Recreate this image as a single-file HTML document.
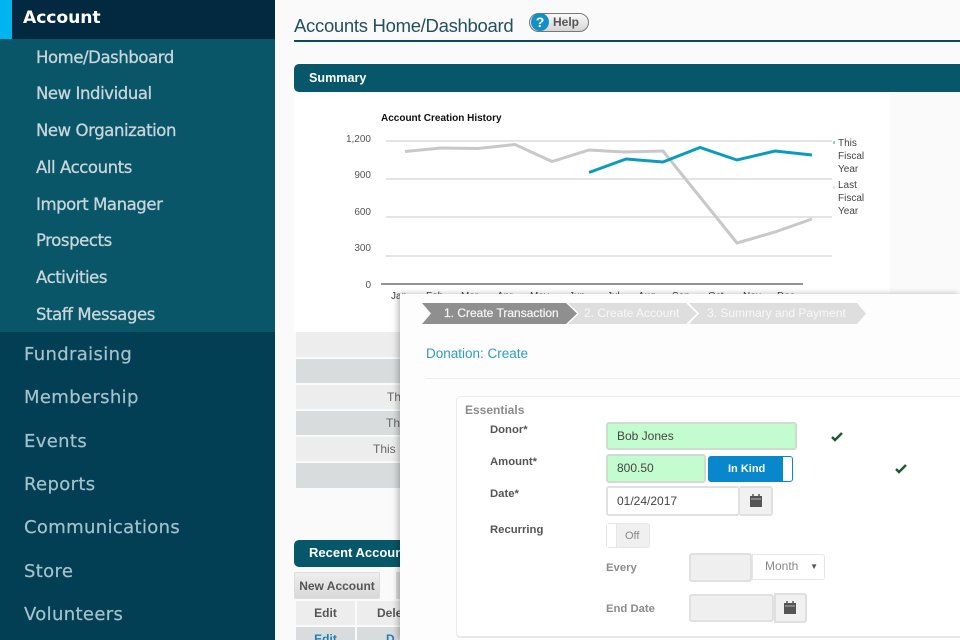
<!DOCTYPE html>
<html><head><meta charset="utf-8"><style>
html,body{margin:0;padding:0;width:960px;height:640px;overflow:hidden;background:#fafafa;font-family:"Liberation Sans",sans-serif}
body{filter:blur(.35px)}
.a{position:absolute;white-space:nowrap}
#s{position:absolute;left:0;top:0;width:275px;height:640px;background:#023f55;font-family:"DejaVu Sans",sans-serif}
.sub{color:#c9d6da;font-size:16.5px;left:36px;line-height:20px;letter-spacing:-.42px;-webkit-text-stroke:.3px #c9d6da}
.top{color:#a5c2ca;font-size:18px;left:24px;line-height:22px;letter-spacing:.35px;-webkit-text-stroke:.2px #a5c2ca}
.r{left:296px;width:110px;background:#ededed;font-size:12px;color:#666;line-height:24px}
.g{background:#d9dcdc}
.l{font-size:11.3px;font-weight:bold;color:#555}
.f{font-size:12px;color:#444;box-sizing:border-box;border:2px solid #e0e0e0;border-radius:3px;line-height:24px;padding-left:9px}
</style></head><body>
<div id="s">
<div class="a" style="left:0;top:0;width:275px;height:39px;background:#02293f"></div>
<div class="a" style="left:0;top:0;width:12px;height:39px;background:#00b4f0"></div>
<div class="a" style="left:0;top:39px;width:275px;height:293px;background:#0a5669"></div>
<div class="a" style="left:23px;top:7px;color:#fff;font-size:17.2px;line-height:22px;font-weight:bold;letter-spacing:-.1px">Account</div>
<div class="a sub" style="top:48px">Home/Dashboard</div>
<div class="a sub" style="top:84px">New Individual</div>
<div class="a sub" style="top:121px">New Organization</div>
<div class="a sub" style="top:158px">All Accounts</div>
<div class="a sub" style="top:195px">Import Manager</div>
<div class="a sub" style="top:231px">Prospects</div>
<div class="a sub" style="top:268px">Activities</div>
<div class="a sub" style="top:305px">Staff Messages</div>
<div class="a top" style="top:344px">Fundraising</div>
<div class="a top" style="top:387px">Membership</div>
<div class="a top" style="top:431px">Events</div>
<div class="a top" style="top:474px">Reports</div>
<div class="a top" style="top:517px">Communications</div>
<div class="a top" style="top:561px">Store</div>
<div class="a top" style="top:604px">Volunteers</div>
</div>

<div class="a" style="left:294px;top:14px;font-size:18.5px;line-height:24px;letter-spacing:-.3px;color:#24505f">Accounts Home/Dashboard</div>
<div class="a" style="left:294px;top:40px;width:666px;height:2px;background:#0c4a5e"></div>
<div class="a" style="left:529px;top:13px;width:58px;height:17px;border:1px solid #777;border-radius:10px;background:linear-gradient(#fafafa,#d5d5d5)"></div>
<div class="a" style="left:531px;top:13px;width:18px;height:18px;border-radius:50%;background:#1291c8;color:#fff;font-weight:bold;font-size:14px;line-height:18px;text-align:center">?</div>
<div class="a" style="left:553px;top:15px;font-size:12px;font-weight:bold;color:#555;line-height:15px">Help</div>

<div class="a" style="left:294px;top:64px;width:666px;height:28px;background:#07576a;border-radius:5px 0 0 5px"></div>
<div class="a" style="left:309px;top:70px;color:#fff;font-size:12.6px;font-weight:bold;line-height:16px">Summary</div>
<div class="a" style="left:294px;top:92px;width:596px;height:240px;background:#fff"></div>

<svg class="a" style="left:294px;top:92px" width="596" height="210" viewBox="294 92 596 210">
<text x="381" y="121" font-size="10" font-weight="bold" fill="#111" font-family="Liberation Sans">Account Creation History</text>
<g stroke="#dcdcdc" stroke-width="1.5"><path d="M386 141H832M386 179H832M386 217H832M386 256H832"/></g>
<path d="M381 284H803" stroke="#555" stroke-width="1.2"/>
<g fill="#555" font-size="10" font-family="Liberation Sans" text-anchor="end"><text x="371" y="142">1,200</text><text x="371" y="178">900</text><text x="371" y="215">600</text><text x="371" y="251">300</text><text x="371" y="288">0</text></g>
<polyline fill="none" stroke="#c8c8c8" stroke-width="3" points="405,151.500 441,148 478,148.500 515,144.500 552,161.500 589,150 624,152 663,151 700,197 737,243 775,232 812,219"/>
<polyline fill="none" stroke="#0a9cbe" stroke-width="3" points="589,172.500 626,159 663,162 700,147.500 737,160 775,151 812,155"/>
<g fill="#444" font-size="10" font-family="Liberation Sans"><text x="838" y="146">This</text><text x="838" y="159">Fiscal</text><text x="838" y="172">Year</text><text x="838" y="188">Last</text><text x="838" y="201">Fiscal</text><text x="838" y="214">Year</text></g>
<path d="M834 141v3" stroke="#0a9cbe"/><path d="M834 186v3" stroke="#ccc"/>
<g fill="#444" font-size="10" font-family="Liberation Sans"><text x="391" y="299">Jan</text><text x="426" y="299">Feb</text><text x="461" y="299">Mar</text><text x="497" y="299">Apr</text><text x="530" y="299">May</text><text x="569" y="299">Jun</text><text x="607" y="299">Jul</text><text x="638" y="299">Aug</text><text x="672" y="299">Sep</text><text x="708" y="299">Oct</text><text x="743" y="299">Nov</text><text x="777" y="299">Dec</text></g>
</svg>

<div class="a r" style="top:332px;height:25px"></div>
<div class="a r g" style="top:359px;height:24px"></div>
<div class="a r" style="top:385px;height:24px"><span class="a" style="left:91px">Th</span></div>
<div class="a r g" style="top:411px;height:24px"><span class="a" style="left:90px">Th</span></div>
<div class="a r" style="top:437px;height:24px"><span class="a" style="left:77px">This</span></div>
<div class="a r g" style="top:463px;height:25px"></div>

<div class="a" style="left:294px;top:540px;width:110px;height:27px;background:#07576a;border-radius:5px 0 0 5px"></div>
<div class="a" style="left:309px;top:545px;color:#fff;font-size:13px;font-weight:bold;line-height:16px">Recent Accounts</div>
<div class="a" style="left:294px;top:572px;width:86px;height:27px;background:linear-gradient(#eee,#d8d8d8);border:1px solid #ddd;box-sizing:border-box;border-radius:2px;font-size:12px;font-weight:bold;color:#555;line-height:27px;text-align:center">New Account</div>
<div class="a" style="left:396px;top:572px;width:10px;height:27px;background:#ddd"></div>
<div class="a" style="left:296px;top:601px;width:59px;height:24px;background:#ededed;font-size:12px;font-weight:bold;color:#555;line-height:24px;text-align:center">Edit</div>
<div class="a" style="left:357px;top:601px;width:50px;height:24px;background:#ededed;font-size:12px;font-weight:bold;color:#555;line-height:24px;padding-left:20px;box-sizing:border-box">Delete</div>
<div class="a" style="left:296px;top:627px;width:59px;height:13px;background:#d9dcdc;font-size:12px;font-weight:bold;color:#1f7fb5;line-height:24px;text-align:center;overflow:hidden">Edit</div>
<div class="a" style="left:357px;top:627px;width:50px;height:13px;background:#d9dcdc;font-size:12px;font-weight:bold;color:#1f7fb5;line-height:24px;padding-left:29px;box-sizing:border-box;overflow:hidden">D</div>

<div class="a" style="left:400px;top:294px;width:560px;height:346px;background:#fdfdfd;box-shadow:-2px 0 6px rgba(0,0,0,.28)"></div>
<svg class="a" style="left:400px;top:294px" width="560" height="40">
<polygon points="168,9 288,9 298,19.500 288,30 168,30 176,19.500" fill="#dedede"/>
<polygon points="289,9 457,9 466,19.500 457,30 289,30 299,19.500" fill="#dedede"/>
<polyline points="167,9 178,19.500 167,30" fill="none" stroke="#fff" stroke-width="1.500"/>
<polyline points="287,9 298,19.500 287,30" fill="none" stroke="#fff" stroke-width="1.500"/>
<polygon points="22,9 166,9 177,19.500 166,30 22,30 31,19.500" fill="#8f8f8f"/>
<g font-family="Liberation Sans" font-size="12"><text x="44" y="23" fill="#f4f4f4" stroke="#f4f4f4" stroke-width=".25">1. Create Transaction</text><text x="184" y="23" fill="#f8f8f8">2. Create Account</text><text x="307" y="23" fill="#f8f8f8">3. Summary and Payment</text></g>
</svg>
<div class="a" style="left:426px;top:345px;font-size:13.500px;line-height:18px;color:#2f9cc0">Donation: Create</div>
<div class="a" style="left:426px;top:378px;width:534px;height:1px;background:#ececec"></div>
<div class="a" style="left:456px;top:396px;width:520px;height:242px;box-sizing:border-box;border:1px solid #ececec;border-bottom:2px solid #e8e8e8;border-radius:4px;background:#fff"></div>
<div class="a" style="left:465px;top:403px;font-size:12px;font-weight:bold;color:#8b8b8b;line-height:15px">Essentials</div>
<div class="a l" style="left:490px;top:423px;line-height:15px">Donor*</div>
<div class="a l" style="left:490px;top:455px;line-height:15px">Amount*</div>
<div class="a l" style="left:490px;top:487px;line-height:15px">Date*</div>
<div class="a l" style="left:490px;top:523px;line-height:15px">Recurring</div>
<div class="a f" style="left:606px;top:422px;width:191px;height:28px;background:#c3fdcf;border-color:#cfdcd2">Bob Jones</div>
<div class="a f" style="left:606px;top:454px;width:100px;height:29px;background:#c3fdcf;border-color:#cfdcd2">800.50</div>
<div class="a" style="left:708px;top:456px;width:85px;height:26px;box-sizing:border-box;background:#0887cc;border:1px solid #0887cc;border-radius:3px;color:#fff;font-size:11px;font-weight:bold;line-height:24px;padding-left:19px">In Kind<span class="a" style="right:0;top:0;width:9px;height:24px;background:#fff;border-radius:0 2px 2px 0"></span></div>
<div class="a f" style="left:606px;top:486px;width:134px;height:30px;background:#fff;line-height:26px">01/24/2017</div>
<div class="a" style="left:740px;top:486px;width:33px;height:30px;box-sizing:border-box;background:#f1f1f1;border:2px solid #e0e0e0;border-left-width:0;border-radius:0 3px 3px 0"></div>
<svg class="a" style="left:750px;top:494px" width="12" height="14"><path d="M0 2H12V13H0Z" fill="#555"/><path d="M1 5H11" stroke="#ddd" stroke-width=".7"/><path d="M3 0V3M9 0V3" stroke="#555" stroke-width="1.5"/></svg>
<div class="a" style="left:606px;top:523px;width:44px;height:25px;box-sizing:border-box;background:#f0f0f0;border:1px solid #e6e6e6;border-radius:3px;color:#888;font-size:11px;line-height:24px;padding-left:18px">Off<span class="a" style="left:0;top:0;width:9px;height:23px;background:#fff;border-right:1px solid #e6e6e6"></span></div>
<div class="a" style="left:606px;top:561px;font-size:11.3px;font-weight:bold;color:#8b8b8b;line-height:15px">Every</div>
<div class="a" style="left:606px;top:602px;font-size:11.3px;font-weight:bold;color:#8b8b8b;line-height:15px">End Date</div>
<div class="a" style="left:689px;top:553px;width:63px;height:29px;box-sizing:border-box;background:#efefef;border:2px solid #e0e0e0;border-radius:3px"></div>
<div class="a" style="left:752px;top:554px;width:73px;height:26px;box-sizing:border-box;background:#fff;border:1px solid #e6e6e6;border-radius:0 3px 3px 0;color:#888;font-size:12px;line-height:23px;padding-left:12px">Month<span class="a" style="right:6px;top:0;font-size:8px;color:#555">▼</span></div>
<div class="a" style="left:689px;top:594px;width:85px;height:28px;box-sizing:border-box;background:#efefef;border:2px solid #e0e0e0;border-radius:3px"></div>
<div class="a" style="left:774px;top:593px;width:33px;height:30px;box-sizing:border-box;background:#f1f1f1;border:2px solid #e0e0e0;border-radius:0 3px 3px 0"></div>
<svg class="a" style="left:784px;top:601px" width="12" height="14"><path d="M0 2H12V13H0Z" fill="#555"/><path d="M1 5H11" stroke="#ddd" stroke-width=".7"/><path d="M3 0V3M9 0V3" stroke="#555" stroke-width="1.5"/></svg>
<svg class="a" style="left:830px;top:431px" width="14" height="12"><path d="M2 6L5 9L12 2" fill="none" stroke="#1a5c34" stroke-width="2.500"/></svg>
<svg class="a" style="left:894px;top:463px" width="14" height="12"><path d="M2 6L5 9L12 2" fill="none" stroke="#1a5c34" stroke-width="2.500"/></svg>
</body></html>
